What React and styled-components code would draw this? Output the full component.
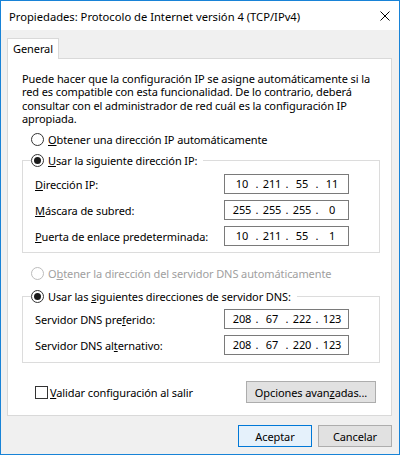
import React from "react";
import styled, { createGlobalStyle } from "styled-components";

const FONT = `"Segoe UI", "Noto Sans", "Liberation Sans", sans-serif`;
const SIZE = "11px";

const GlobalStyle = createGlobalStyle`
  html, body { margin: 0; padding: 0; background: #ffffff; }
  body { font-family: ${FONT}; font-size: ${SIZE}; color: #000; }
  * { box-sizing: border-box; }
`;

const Window = styled.div`
  width: 400px;
  height: 455px;
  border: 1px solid #1883d7;
  display: flex;
  flex-direction: column;
  background: #f0f0f0;
  font-family: ${FONT};
  font-size: ${SIZE};
  letter-spacing: -0.1px;
`;

const TitleBar = styled.div`
  height: 29px;
  flex: none;
  background: #ffffff;
  display: flex;
  align-items: center;
  padding-left: 8px;
  padding-right: 9px;
  padding-top: 1px;
`;

const Title = styled.span`
  flex: 1;
  white-space: nowrap;
  color: #000;
  font-size: 11.2px;
  letter-spacing: 0;
`;

const CloseIcon = styled.svg`
  width: 10px;
  height: 10px;
  flex: none;
`;

const Body = styled.div`
  flex: 1;
  display: flex;
  flex-direction: column;
  padding: 8px 7px 7px 6px;
`;

const TabStrip = styled.div`
  display: flex;
  height: 20px;
`;

const Tab = styled.div`
  position: relative;
  z-index: 1;
  width: 52px;
  height: 21px;
  background: #ffffff;
  border: 1px solid #d9d9d9;
  border-bottom: none;
  display: flex;
  align-items: center;
  justify-content: center;
  padding-bottom: 1px;
`;

const Panel = styled.div`
  width: 385px;
  height: 358px;
  background: #ffffff;
  border: 1px solid #d9d9d9;
  padding: 13px 11px 0 14px;
  display: flex;
  flex-direction: column;
`;

const Intro = styled.p`
  margin: 0;
  line-height: 13.3px;
  white-space: nowrap;
`;

const RadioRow = styled.div`
  display: flex;
  align-items: center;
  gap: 4px;
  height: 15px;
  padding-left: ${(p) => p.$indent ?? 9}px;
  margin-top: ${(p) => p.$top ?? 0}px;
  color: ${(p) => (p.$disabled ? "#a0a0a0" : "#000")};
  white-space: nowrap;
`;

const RadioCircle = styled.span`
  width: 13px;
  height: 13px;
  flex: none;
  border-radius: 50%;
  border: 1px solid ${(p) => (p.$disabled ? "#bcbcbc" : "#333333")};
  background: #ffffff;
  display: flex;
  align-items: center;
  justify-content: center;
`;

const RadioDot = styled.span`
  width: 7px;
  height: 7px;
  border-radius: 50%;
  background: #1a1a1a;
`;

const Group = styled.fieldset`
  margin: ${(p) => p.$top}px 0 0 0;
  padding: 0;
  border: 1px solid #dcdcdc;
  min-width: 0;
`;

const Legend = styled.legend`
  margin-left: 8px;
  padding: 0 6px 0 0;
  height: 15px;
`;

const Rows = styled.div`
  display: flex;
  flex-direction: column;
  gap: 6px;
  padding: ${(p) => p.$pt}px 30px ${(p) => p.$pb}px 12px;
`;

const FieldRow = styled.div`
  display: flex;
  align-items: center;
  justify-content: space-between;
  height: 20px;
`;

const FieldLabel = styled.span`
  white-space: nowrap;
`;

const IpBox = styled.div`
  width: 125px;
  height: 20px;
  border: 1px solid #7a7a7a;
  background: #ffffff;
  display: grid;
  grid-template-columns: 24px 6px 24px 6px 24px 6px 24px;
  align-items: center;
  padding-left: 5px;
  color: #000;
`;

const IpCell = styled.span`
  text-align: center;
  line-height: 18px;
`;

const Key = styled.span`
  text-decoration: underline;
  text-underline-offset: 1px;
`;

const BottomRow = styled.div`
  display: flex;
  align-items: center;
  justify-content: space-between;
  margin-top: 18px;
  padding: 0 4px 0 13px;
`;

const CheckRow = styled.label`
  display: flex;
  align-items: center;
  gap: 2px;
  white-space: nowrap;
`;

const CheckBox = styled.span`
  width: 13px;
  height: 13px;
  border: 1px solid #333333;
  background: #ffffff;
  flex: none;
`;

const Button = styled.button`
  width: ${(p) => p.$w}px;
  height: 22px;
  padding: 0;
  font-family: ${FONT};
  font-size: ${SIZE};
  letter-spacing: -0.1px;
  color: #000;
  background: ${(p) => (p.$default ? "#e5f1fb" : "#e1e1e1")};
  border: 1px solid ${(p) => (p.$default ? "#0078d7" : "#adadad")};
  white-space: nowrap;
`;

const Footer = styled.div`
  display: flex;
  justify-content: flex-end;
  gap: 6px;
  margin-top: 9px;
`;

function Radio({ checked, disabled }) {
  return (
    <RadioCircle $disabled={disabled}>{checked && <RadioDot />}</RadioCircle>
  );
}

function IpField({ value }) {
  const parts = value.split(".");
  const cells = [];
  parts.forEach((p, i) => {
    cells.push(<IpCell key={"p" + i}>{p}</IpCell>);
    if (i < parts.length - 1) cells.push(<IpCell key={"d" + i}>.</IpCell>);
  });
  return <IpBox>{cells}</IpBox>;
}

export default function App() {
  return (
    <>
      <GlobalStyle />
      <Window>
        <TitleBar>
          <Title>Propiedades: Protocolo de Internet versión 4 (TCP/IPv4)</Title>
          <CloseIcon viewBox="0 0 10 10">
            <path d="M0.5 0.5 L9.5 9.5 M9.5 0.5 L0.5 9.5" stroke="#000" strokeWidth="1" fill="none" />
          </CloseIcon>
        </TitleBar>
        <Body>
          <TabStrip>
            <Tab>General</Tab>
          </TabStrip>
          <Panel>
            <Intro>
              Puede hacer que la configuración IP se asigne automáticamente si la
              <br />
              red es compatible con esta funcionalidad. De lo contrario, deberá
              <br />
              consultar con el administrador de red cuál es la configuración IP
              <br />
              apropiada.
            </Intro>
            <RadioRow $top={7}>
              <Radio />
              <span>
                <Key>O</Key>btener una dirección IP automáticamente
              </span>
            </RadioRow>
            <Group $top={6}>
              <Legend>
                <RadioRow $indent={0}>
                  <Radio checked />
                  <span>
                    <Key>U</Key>sar la siguiente dirección IP:
                  </span>
                </RadioRow>
              </Legend>
              <Rows $pt={6} $pb={6}>
                <FieldRow>
                  <FieldLabel>
                    <Key>D</Key>irección IP:
                  </FieldLabel>
                  <IpField value="10.211.55.11" />
                </FieldRow>
                <FieldRow>
                  <FieldLabel>
                    <Key>M</Key>áscara de subred:
                  </FieldLabel>
                  <IpField value="255.255.255.0" />
                </FieldRow>
                <FieldRow>
                  <FieldLabel>
                    <Key>P</Key>uerta de enlace predeterminada:
                  </FieldLabel>
                  <IpField value="10.211.55.1" />
                </FieldRow>
              </Rows>
            </Group>
            <RadioRow $top={13} $disabled>
              <Radio disabled />
              <span>
                O<Key>b</Key>tener la dirección del servidor DNS automáticamente
              </span>
            </RadioRow>
            <Group $top={8}>
              <Legend>
                <RadioRow $indent={0}>
                  <Radio checked />
                  <span>
                    Usar las <Key>s</Key>iguientes direcciones de servidor DNS:
                  </span>
                </RadioRow>
              </Legend>
              <Rows $pt={5} $pb={7}>
                <FieldRow>
                  <FieldLabel>
                    Servidor DNS pre<Key>f</Key>erido:
                  </FieldLabel>
                  <IpField value="208.67.222.123" />
                </FieldRow>
                <FieldRow>
                  <FieldLabel>
                    Servidor DNS al<Key>t</Key>ernativo:
                  </FieldLabel>
                  <IpField value="208.67.220.123" />
                </FieldRow>
              </Rows>
            </Group>
            <BottomRow>
              <CheckRow>
                <CheckBox />
                <span>
                  <Key>V</Key>alidar configuración al salir
                </span>
              </CheckRow>
              <Button $w={130}>
                Opciones avan<Key>z</Key>adas...
              </Button>
            </BottomRow>
          </Panel>
          <Footer>
            <Button $w={74} $default>
              Aceptar
            </Button>
            <Button $w={74}>Cancelar</Button>
          </Footer>
        </Body>
      </Window>
    </>
  );
}
